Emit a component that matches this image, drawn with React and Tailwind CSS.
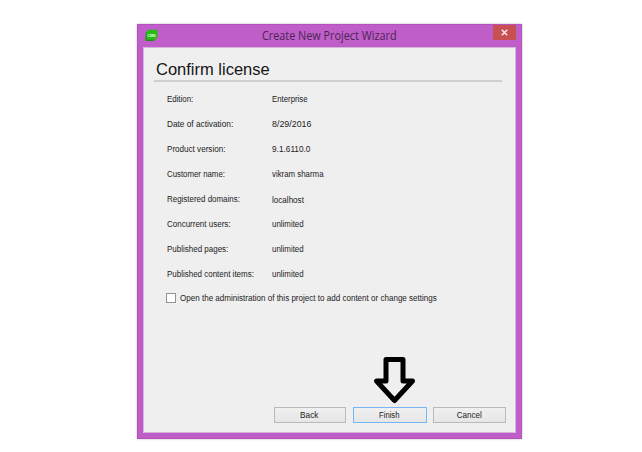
const rows = [
  { label: "Edition:", value: "Enterprise", lt: "scale-x-[0.855]", vt: "scale-x-[0.85]" },
  { label: "Date of activation:", value: "8/29/2016", lt: "scale-x-[0.9]", vt: "scale-x-[0.965]" },
  { label: "Product version:", value: "9.1.6110.0", lt: "scale-x-[0.88]", vt: "scale-x-[0.9]" },
  { label: "Customer name:", value: "vikram sharma", lt: "scale-x-[0.853]", vt: "scale-x-[0.855]" },
  { label: "Registered domains:", value: "localhost", lt: "scale-x-[0.865]", vt: "scale-x-[0.88] pt-px" },
  { label: "Concurrent users:", value: "unlimited", lt: "scale-x-[0.87]", vt: "scale-x-[0.86]" },
  { label: "Published pages:", value: "unlimited", lt: "scale-x-[0.87]", vt: "scale-x-[0.86]" },
  { label: "Published content items:", value: "unlimited", lt: "scale-x-[0.868]", vt: "scale-x-[0.86]" },
];

function TitleBar() {
  return (
    <header className="flex h-[22px] shrink-0 items-start">
      <svg className="mt-[4px] ml-[2px] h-[13px] w-[13px] shrink-0" viewBox="0 0 13 13">
        <path d="M4 .7H11.5Q12.5 .7 12.5 1.7V7.5Q12.5 8.5 11.5 9.2L9.2 11.4Q8.6 12 7.8 12H1.4Q.6 12 .6 11.2V5Q.6 4 1.3 3.3L3 1.2Q3.4 .7 4 .7Z" fill="#26bd12" />
        <path d="M.6 5V11.2Q.6 12 1.4 12H7.8Q8.6 12 9.2 11.4L9.8 10.8H1.8V2.8Q.6 4 .6 5Z" fill="#278b1c" />
        <text x="6.4" y="7.8" textAnchor="middle" fontSize="3.8" fontWeight="700" fill="#e9ffe5" fontFamily="Liberation Sans, sans-serif">CMS</text>
      </svg>
      <h1 className="ml-[104px] h-[22px] w-[200px] origin-left scale-x-[0.903] whitespace-nowrap font-['Open_Sans',sans-serif] text-[12px] leading-[22px] text-[#4b2552]">
        Create New Project Wizard
      </h1>
      <button className="ml-auto flex h-[15px] w-[23px] items-center justify-center bg-[#c75050]" aria-label="Close">
        <svg className="h-[7px] w-[7px]" viewBox="0 0 7 7">
          <path d="M.8 .8L6.2 6.2M6.2 .8L.8 6.2" stroke="#fbe9f0" strokeWidth="1.5" />
        </svg>
      </button>
    </header>
  );
}

function Button({ children, className, textClass }) {
  return (
    <button className={`flex h-[16px] items-center justify-center border bg-linear-to-b from-[#f0f0f0] to-[#e6e6e6] pt-[2px] leading-none ${className}`}>
      <span className={textClass}>{children}</span>
    </button>
  );
}

export default function App() {
  return (
    <main className="relative h-[452px] w-[642px] overflow-hidden bg-white pt-[24px] pl-[137px] font-['Liberation_Sans',Arial,sans-serif] text-[9.2px] text-[#222]">
      <section className="flex h-[415px] w-[385px] flex-col border border-[#b552bd] bg-[#bf5ec9] px-[5px] pb-[5px] shadow-[0_0_2px_#bbb]">
        <TitleBar />
        <div className="flex flex-1 flex-col border border-[#d5b5da] bg-[#efefef]">
          <h2 className="ml-[12px] mt-[10px] h-[22px] whitespace-nowrap text-[16.5px] leading-[22px] text-[#161616]">Confirm license</h2>
          <div className="ml-[10px] h-[2px] w-[348px] bg-[#cfcfcf]" />
          <dl className="mt-[5px] ml-[23px]">
            {rows.map((row) => (
              <div key={row.label} className="flex h-[25px] whitespace-nowrap leading-[25px]">
                <dt className="w-[105px]">
                  <span className={`inline-block origin-left ${row.lt}`}>{row.label}</span>
                </dt>
                <dd className={`origin-left ${row.vt}`}>{row.value}</dd>
              </div>
            ))}
          </dl>
          <label className="ml-[22px] mt-[6px] flex h-[11px] items-center whitespace-nowrap">
            <span className="mr-[4px] mb-px h-[10px] w-[10px] shrink-0 border border-[#929292] bg-white" />
            <span className="origin-left scale-x-[0.876]">Open the administration of this project to add content or change settings</span>
          </label>
          <div className="mt-auto mb-[9px] ml-[130px] flex">
            <Button className="w-[72px] border-[#b9b9b9] pr-[2px]" textClass="scale-x-[0.9]">Back</Button>
            <Button className="ml-[7px] w-[74px] border-[#76b7f5] pr-px" textClass="scale-x-[0.83]">Finish</Button>
            <Button className="ml-[6px] w-[73px] border-[#b9b9b9] pr-px" textClass="scale-x-[0.875]">Cancel</Button>
          </div>
        </div>
      </section>
      <svg className="absolute left-[372px] top-[355px] h-[50px] w-[46px]" viewBox="0 0 46 50">
        <path d="M14 4.5H31V26H40.5L22.5 45.5L4.5 26H14Z" fill="#efefef" stroke="#000" strokeWidth="5" strokeLinejoin="round" />
      </svg>
    </main>
  );
}
